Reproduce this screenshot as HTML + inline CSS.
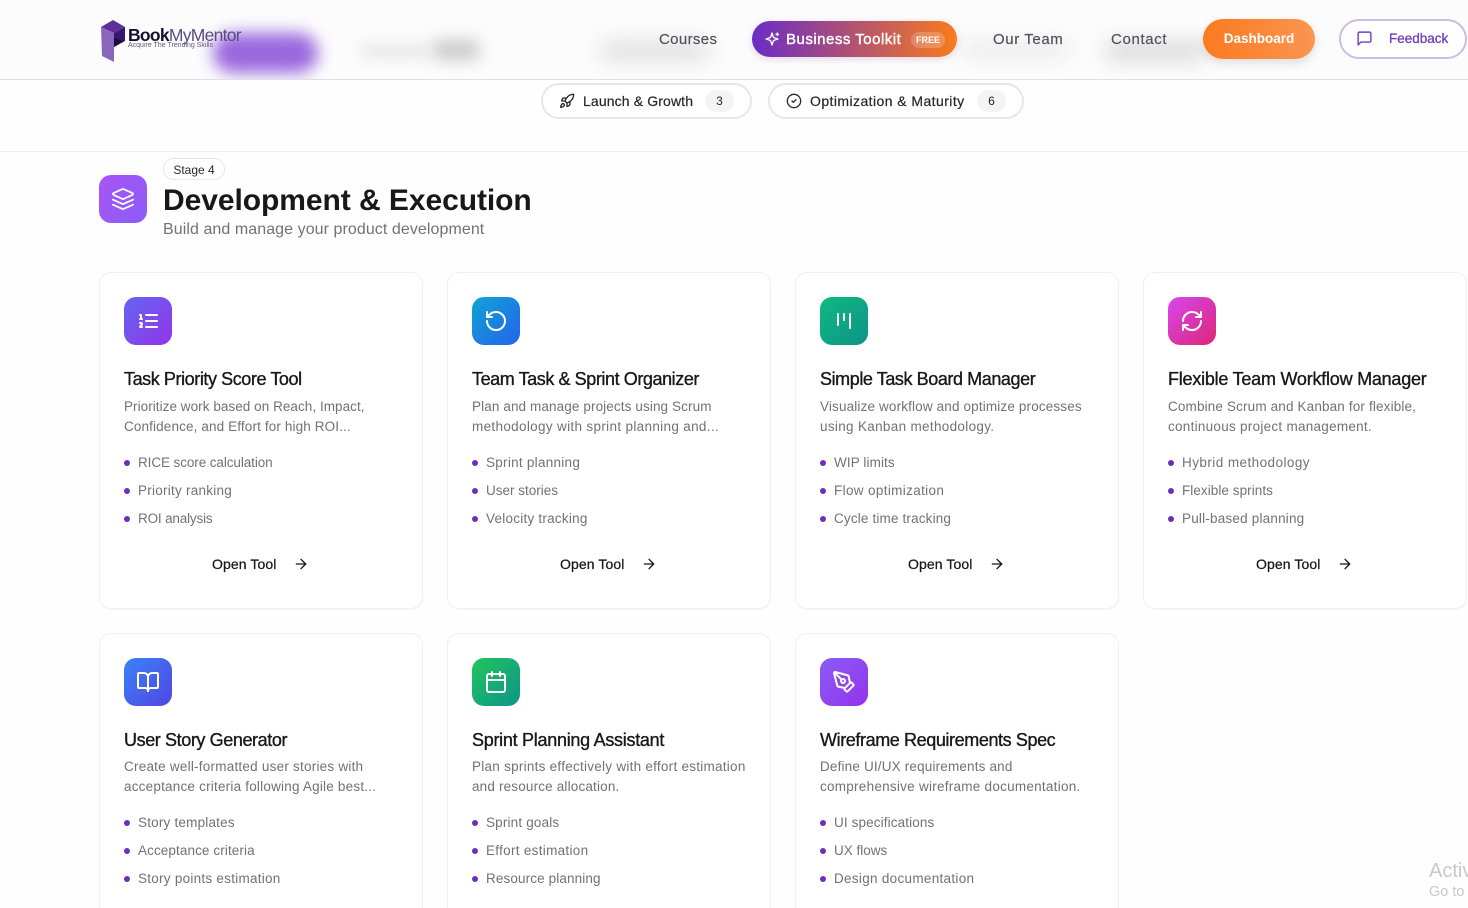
<!DOCTYPE html>
<html lang="en">
<head>
<meta charset="utf-8">
<title>Business Toolkit</title>
<style>
*{box-sizing:border-box;margin:0;padding:0}
html,body{width:1468px;height:908px;overflow:hidden;background:#fefefe;font-family:"Liberation Sans",Arial,sans-serif;color:#18181b}
body{position:relative}
.a{position:absolute;white-space:nowrap}
svg{position:absolute;fill:none;stroke:currentColor;stroke-width:2;stroke-linecap:round;stroke-linejoin:round}
header{position:absolute;left:0;top:0;width:1468px;height:80px;background:#fcfcfd;border-bottom:1px solid #dfe0e3;overflow:hidden}
.blob{position:absolute;border-radius:20px}
.nav{font-size:15px;line-height:20px;top:30px;color:#4f4f5a;letter-spacing:.35px;-webkit-text-stroke:.15px #4f4f5a}
.pill{position:absolute;top:83px;height:36px;border:2px solid #e7e7ea;border-radius:18px;background:#fff}
.pt{top:91px;font-size:14px;line-height:20px;color:#27272a;-webkit-text-stroke:.2px #27272a}
.cnt{position:absolute;top:90px;width:29px;height:22px;border-radius:11px;background:#f4f4f5;font-size:12px;line-height:22px;text-align:center;color:#27272a}
.card{position:absolute;width:324px;background:#fff;border:1px solid #f0f0f2;border-radius:12px;box-shadow:0 1px 2px rgba(0,0,0,.03)}
.r1{top:272px;height:337px}
.r2{top:633px;height:275px;border-bottom:0;border-radius:12px 12px 0 0;box-shadow:none}
.ic{position:absolute;left:24px;top:24px;width:48px;height:48px;border-radius:12px;color:#fff}
.ic svg{left:12px;top:12px;width:24px;height:24px}
.card h3{position:absolute;left:24px;top:94px;font-size:18px;line-height:24px;font-weight:400;white-space:nowrap;color:#18181b;-webkit-text-stroke:.35px #18181b;letter-spacing:-.42px}
.card p{position:absolute;left:24px;font-size:13.5px;line-height:20px;color:#71717a;white-space:nowrap}
.l1{top:124px}.l2{top:144px}
.r2 .l1{top:123px}.r2 .l2{top:143px}
.card ul{list-style:none}
.card li{position:absolute;left:38px;font-size:13.5px;line-height:20px;color:#71717a;white-space:nowrap}
.card li::before{content:"";position:absolute;left:-14px;top:7px;width:6px;height:6px;border-radius:50%;background:#6b2fb8}
.b1{top:180px}.b2{top:208px}.b3{top:236px}
.r2 .b1{top:179px}.r2 .b2{top:207px}.r2 .b3{top:235px}
.open{position:absolute;left:112px;top:281px;font-size:14px;line-height:20px;white-space:nowrap;color:#18181b;-webkit-text-stroke:.25px #18181b;letter-spacing:.1px}
.arr{left:193px;top:283px;width:16px;height:16px;color:#18181b}
</style>
</head>
<body>

<header>
  <div class="blob" style="left:213px;top:33px;width:105px;height:40px;background:#9a68de;filter:blur(8px)"></div>
  <div class="blob" style="left:360px;top:44px;width:70px;height:14px;background:#e8e8e8;filter:blur(7px)"></div>
  <div class="blob" style="left:432px;top:40px;width:48px;height:20px;background:#c8c8c8;filter:blur(8px)"></div>
  <div class="blob" style="left:600px;top:42px;width:110px;height:18px;background:#dedede;filter:blur(10px)"></div>
  <div class="blob" style="left:960px;top:42px;width:110px;height:14px;background:#e8e8e8;filter:blur(10px)"></div>
  <div class="blob" style="left:1105px;top:42px;width:100px;height:18px;background:#d6d6d6;filter:blur(10px)"></div>

  <svg style="left:98px;top:18px;width:30px;height:46px;stroke:none" viewBox="98 18 30 46">
    <polygon points="101,27 114,33 114,62 102,56" fill="#8a66bb"/>
    <polygon points="101,27 113,20 125,27 114,33" fill="#5d2f97"/>
    <polygon points="114,33 125,27 125,41 114,47" fill="#3a1670"/>
    <polygon points="114,38 124,41 114,47" fill="#1b0b3c"/>
  </svg>
  <div class="a" style="left:128px;top:24px;font-size:17.5px;line-height:22px;letter-spacing:-.72px;color:#5b4a85"><b style="color:#17112e">Book</b>MyMentor</div>
  <div class="a" style="left:128px;top:41px;font-size:7px;line-height:9px;color:#5f5a78">Acquire The Trending Skills</div>

  <div class="a nav" style="left:659px">Courses</div>

  <div class="a" style="left:752px;top:21px;width:205px;height:36px;border-radius:18px;background:linear-gradient(90deg,#6a2cc6,#f97b1c);box-shadow:0 2px 8px rgba(120,60,120,.2)"></div>
  <svg viewBox="0 0 24 24" style="left:764px;top:31px;width:16px;height:16px;color:#fff"><path d="m12 3-1.912 5.813a2 2 0 0 1-1.275 1.275L3 12l5.813 1.912a2 2 0 0 1 1.275 1.275L12 21l1.912-5.813a2 2 0 0 1 1.275-1.275L21 12l-5.813-1.912a2 2 0 0 1-1.275-1.275L12 3Z"/><path d="M20 3v4M22 5h-4"/></svg>
  <div class="a" style="left:786px;top:30px;font-size:15px;line-height:20px;color:#fff;-webkit-text-stroke:.4px #fff;letter-spacing:.5px">Business Toolkit</div>
  <div class="a" style="left:911px;top:32px;width:34px;height:16px;border-radius:8px;background:rgba(255,255,255,.2);font-size:9px;line-height:16px;text-align:center;color:#fff;font-weight:700">FREE</div>

  <div class="a nav" style="left:993px;letter-spacing:.6px">Our Team</div>
  <div class="a nav" style="left:1111px;letter-spacing:.65px">Contact</div>

  <div class="a" style="left:1203px;top:19px;width:112px;height:40px;border-radius:20px;background:linear-gradient(90deg,#fb7a20,#fb9550);box-shadow:0 4px 10px rgba(0,0,0,.12);font-size:13.5px;line-height:40px;text-align:center;font-weight:700;color:#fff">Dashboard</div>

  <div class="a" style="left:1339px;top:19px;width:128px;height:40px;border-radius:20px;border:2px solid #cdbce6;background:#fff"></div>
  <svg viewBox="0 0 24 24" style="left:1356px;top:30px;width:17px;height:17px;color:#6d3fb8"><path d="M21 15a2 2 0 0 1-2 2H7l-4 4V5a2 2 0 0 1 2-2h14a2 2 0 0 1 2 2z"/></svg>
  <div class="a" style="left:1389px;top:29px;font-size:13.5px;line-height:20px;color:#6d3fb8;-webkit-text-stroke:.3px #6d3fb8">Feedback</div>
</header>

<div class="pill" style="left:541px;width:211px"></div>
<svg viewBox="0 0 24 24" style="left:559px;top:93px;width:16px;height:16px;color:#27272a"><path d="M4.5 16.5c-1.5 1.26-2 5-2 5s3.74-.5 5-2c.71-.84.7-2.13-.09-2.91a2.18 2.18 0 0 0-2.91-.09z"/><path d="m12 15-3-3a22 22 0 0 1 2-3.95A12.88 12.88 0 0 1 22 2c0 2.72-.78 7.5-6 11a22.35 22.35 0 0 1-4 2z"/><path d="M9 12H4s.55-3.03 2-4c1.62-1.08 5 0 5 0"/><path d="M12 15v5s3.03-.55 4-2c1.08-1.62 0-5 0-5"/></svg>
<div class="a pt" style="left:583px;letter-spacing:.13px">Launch &amp; Growth</div>
<div class="cnt" style="left:705px">3</div>

<div class="pill" style="left:768px;width:256px"></div>
<svg viewBox="0 0 24 24" style="left:786px;top:93px;width:16px;height:16px;color:#27272a"><circle cx="12" cy="12" r="10"/><path d="m9 12 2 2 4-4"/></svg>
<div class="a pt" style="left:810px;letter-spacing:.43px">Optimization &amp; Maturity</div>
<div class="cnt" style="left:977px">6</div>

<div class="a" style="left:0;top:151px;width:1468px;height:1px;background:#f0f0f2"></div>

<div class="a" style="left:99px;top:175px;width:48px;height:48px;border-radius:12px;background:linear-gradient(135deg,#a855f7,#8b5cf6);color:#fff">
  <svg viewBox="0 0 24 24" style="left:12px;top:12px;width:24px;height:24px;stroke-width:1.8"><path d="M12.83 2.18a2 2 0 0 0-1.66 0L2.6 6.08a1 1 0 0 0 0 1.83l8.58 3.91a2 2 0 0 0 1.66 0l8.58-3.9a1 1 0 0 0 0-1.83Z"/><path d="m22 17.65-9.17 4.16a2 2 0 0 1-1.66 0L2 17.65"/><path d="m22 12.65-9.17 4.16a2 2 0 0 1-1.66 0L2 12.65"/></svg>
</div>
<div class="a" style="left:163px;top:158px;width:62px;height:22px;border:1px solid #e7e7ea;border-radius:11px;background:#fff;font-size:12px;line-height:22px;text-align:center;color:#27272a">Stage 4</div>
<h1 class="a" style="left:163px;top:181px;font-size:30px;line-height:40px;font-weight:700;color:#18181b;letter-spacing:-.06px">Development &amp; Execution</h1>
<div class="a" style="left:163px;top:220px;font-size:16px;line-height:20px;color:#71717a;letter-spacing:.07px">Build and manage your product development</div>

<!-- Row 1 -->
<div class="card r1" style="left:99px">
  <div class="ic" style="background:linear-gradient(135deg,#6366f1,#9333ea)"><svg viewBox="0 0 24 24"><path d="M10 6h11M10 12h11M10 18h11M4 6h1v4M4 10h2M6 18H4c0-1 2-2 2-3s-1-1.5-2-1"/></svg></div>
  <h3>Task Priority Score Tool</h3>
  <p class="l1" style="letter-spacing:.05px">Prioritize work based on Reach, Impact,</p>
  <p class="l2" style="letter-spacing:.13px">Confidence, and Effort for high ROI...</p>
  <ul><li class="b1" style="letter-spacing:-.09px">RICE score calculation</li><li class="b2" style="letter-spacing:.25px">Priority ranking</li><li class="b3" style="letter-spacing:-.17px">ROI analysis</li></ul>
  <div class="open">Open Tool</div>
  <svg class="arr" viewBox="0 0 24 24"><path d="M5 12h14"/><path d="m12 5 7 7-7 7"/></svg>
</div>

<div class="card r1" style="left:447px">
  <div class="ic" style="background:linear-gradient(135deg,#0ea5d4,#2563eb)"><svg viewBox="0 0 24 24"><path d="M3 12a9 9 0 1 0 9-9 9.75 9.75 0 0 0-6.74 2.74L3 8"/><path d="M3 3v5h5"/></svg></div>
  <h3>Team Task &amp; Sprint Organizer</h3>
  <p class="l1" style="letter-spacing:.11px">Plan and manage projects using Scrum</p>
  <p class="l2" style="letter-spacing:.33px">methodology with sprint planning and...</p>
  <ul><li class="b1" style="letter-spacing:.27px">Sprint planning</li><li class="b2">User stories</li><li class="b3" style="letter-spacing:.24px">Velocity tracking</li></ul>
  <div class="open">Open Tool</div>
  <svg class="arr" viewBox="0 0 24 24"><path d="M5 12h14"/><path d="m12 5 7 7-7 7"/></svg>
</div>

<div class="card r1" style="left:795px">
  <div class="ic" style="background:linear-gradient(135deg,#10b981,#0d9488)"><svg viewBox="0 0 24 24"><path d="M6 5v11M12 5v6M18 5v14"/></svg></div>
  <h3>Simple Task Board Manager</h3>
  <p class="l1" style="letter-spacing:.15px">Visualize workflow and optimize processes</p>
  <p class="l2" style="letter-spacing:.32px">using Kanban methodology.</p>
  <ul><li class="b1" style="letter-spacing:.1px">WIP limits</li><li class="b2" style="letter-spacing:.35px">Flow optimization</li><li class="b3" style="letter-spacing:.16px">Cycle time tracking</li></ul>
  <div class="open">Open Tool</div>
  <svg class="arr" viewBox="0 0 24 24"><path d="M5 12h14"/><path d="m12 5 7 7-7 7"/></svg>
</div>

<div class="card r1" style="left:1143px">
  <div class="ic" style="background:linear-gradient(135deg,#d946ef,#db2777)"><svg viewBox="0 0 24 24"><path d="M3 12a9 9 0 0 1 9-9 9.75 9.75 0 0 1 6.74 2.74L21 8"/><path d="M21 3v5h-5"/><path d="M21 12a9 9 0 0 1-9 9 9.75 9.75 0 0 1-6.74-2.74L3 16"/><path d="M8 16H3v5"/></svg></div>
  <h3 style="letter-spacing:-.23px">Flexible Team Workflow Manager</h3>
  <p class="l1" style="letter-spacing:.15px">Combine Scrum and Kanban for flexible,</p>
  <p class="l2" style="letter-spacing:.27px">continuous project management.</p>
  <ul><li class="b1" style="letter-spacing:.44px">Hybrid methodology</li><li class="b2" style="letter-spacing:.06px">Flexible sprints</li><li class="b3" style="letter-spacing:.2px">Pull-based planning</li></ul>
  <div class="open">Open Tool</div>
  <svg class="arr" viewBox="0 0 24 24"><path d="M5 12h14"/><path d="m12 5 7 7-7 7"/></svg>
</div>

<!-- Row 2 -->
<div class="card r2" style="left:99px">
  <div class="ic" style="background:linear-gradient(135deg,#3b82f6,#4f46e5)"><svg viewBox="0 0 24 24"><path d="M12 7v14"/><path d="M3 18a1 1 0 0 1-1-1V4a1 1 0 0 1 1-1h5a4 4 0 0 1 4 4 4 4 0 0 1 4-4h5a1 1 0 0 1 1 1v13a1 1 0 0 1-1 1h-6a3 3 0 0 0-3 3 3 3 0 0 0-3-3z"/></svg></div>
  <h3 style="letter-spacing:-.4px">User Story Generator</h3>
  <p class="l1" style="letter-spacing:.23px">Create well-formatted user stories with</p>
  <p class="l2" style="letter-spacing:.21px">acceptance criteria following Agile best...</p>
  <ul><li class="b1" style="letter-spacing:.2px">Story templates</li><li class="b2" style="letter-spacing:.1px">Acceptance criteria</li><li class="b3" style="letter-spacing:.26px">Story points estimation</li></ul>
</div>

<div class="card r2" style="left:447px">
  <div class="ic" style="background:linear-gradient(135deg,#22c55e,#0d9488)"><svg viewBox="0 0 24 24"><path d="M8 2v4M16 2v4"/><rect x="3" y="4" width="18" height="18" rx="2"/><path d="M3 10h18"/></svg></div>
  <h3 style="letter-spacing:-.28px">Sprint Planning Assistant</h3>
  <p class="l1" style="letter-spacing:.26px">Plan sprints effectively with effort estimation</p>
  <p class="l2" style="letter-spacing:.17px">and resource allocation.</p>
  <ul><li class="b1" style="letter-spacing:.17px">Sprint goals</li><li class="b2" style="letter-spacing:.3px">Effort estimation</li><li class="b3" style="letter-spacing:.12px">Resource planning</li></ul>
</div>

<div class="card r2" style="left:795px">
  <div class="ic" style="background:linear-gradient(135deg,#8b5cf6,#9333ea)"><svg viewBox="0 0 24 24"><path d="M15.707 21.293a1 1 0 0 1-1.414 0l-1.586-1.586a1 1 0 0 1 0-1.414l5.586-5.586a1 1 0 0 1 1.414 0l1.586 1.586a1 1 0 0 1 0 1.414z"/><path d="m18 13-1.375-6.874a1 1 0 0 0-.746-.776L3.235 2.028a1 1 0 0 0-1.207 1.207L5.35 15.879a1 1 0 0 0 .776.746L13 18"/><path d="m2.3 2.3 7.286 7.286"/><circle cx="11" cy="11" r="2"/></svg></div>
  <h3 style="letter-spacing:-.4px">Wireframe Requirements Spec</h3>
  <p class="l1" style="letter-spacing:.17px">Define UI/UX requirements and</p>
  <p class="l2" style="letter-spacing:.26px">comprehensive wireframe documentation.</p>
  <ul><li class="b1" style="letter-spacing:.12px">UI specifications</li><li class="b2">UX flows</li><li class="b3" style="letter-spacing:.3px">Design documentation</li></ul>
</div>

<div class="a" style="left:1429px;top:859px;width:39px;overflow:hidden;font-size:20px;line-height:24px;color:#c9c9cb">Activate Windows</div>
<div class="a" style="left:1429px;top:883px;width:39px;overflow:hidden;font-size:14.5px;line-height:18px;color:#c9c9cb">Go to Settings to activate Windows.</div>

</body>
</html>
